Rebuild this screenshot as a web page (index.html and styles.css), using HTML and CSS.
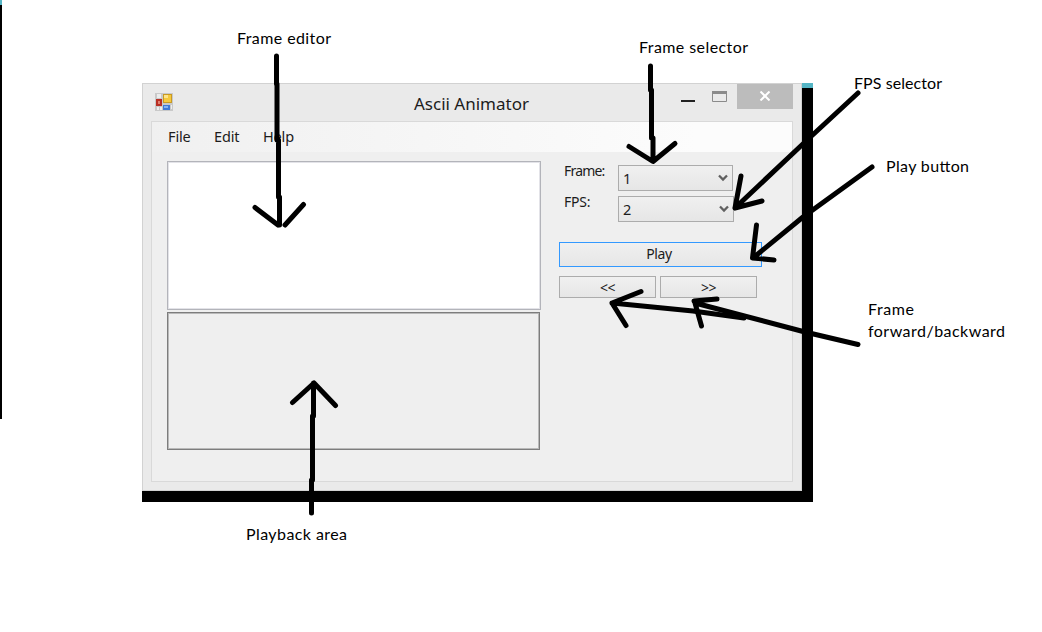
FILE: index.html
```html
<!DOCTYPE html>
<html lang="en">
<head>
<meta charset="utf-8">
<title>Ascii Animator</title>
<link rel="stylesheet" href="styles.css">
</head>
<body>
<div class="edge"></div>
<main class="backdrop">
  <section class="window">
    <header class="titlebar">
      <svg class="app-icon" width="18" height="18" viewBox="0 0 18 18">
        <rect width="18" height="18" fill="#c9c9c9"/>
        <rect x="2" y="1" width="4" height="4" fill="#ececec"/>
        <rect x="1" y="6" width="6" height="7" fill="#b92f24"/>
        <rect x="3" y="8" width="2" height="3" fill="#e08070"/>
        <rect x="8" y="1" width="9" height="9" fill="#c99a23"/>
        <rect x="9" y="2" width="7" height="7" fill="#f6c93c"/>
        <rect x="9" y="2" width="4" height="3" fill="#fde58b"/>
        <rect x="8" y="12" width="7" height="5" fill="#3e78d6"/>
        <rect x="9" y="13" width="4" height="2" fill="#83b2f4"/>
        <path d="M2 14h2v3H2zM5 14h2v3H5zM16 12h1v4h-1z" fill="#eee"/>
      </svg>
      <h1 class="title">Ascii Animator</h1>
      <div class="controls">
        <svg width="54" height="25" viewBox="0 0 54 25">
          <path d="M0 16h14v2H0z" fill="#222"/>
          <path d="M31.500 7.500h14v10h-14z" fill="none" stroke="#8b8b8b"/>
          <path d="M31 7h15v3H31z" fill="#8b8b8b"/>
        </svg>
        <span class="close"><svg width="12" height="10" viewBox="0 0 12 10"><path d="M1.500.500l9 9M10.500.500l-9 9" stroke="#fff" stroke-width="2"/></svg></span>
      </div>
    </header>
    <div class="client">
      <nav class="menu"><span class="file">File</span><span class="edit">Edit</span><span>Help</span></nav>
      <div class="content">
        <div class="panes">
          <div class="editor"></div>
          <div class="playback"></div>
        </div>
        <div class="side">
          <div class="row"><span class="label">Frame:</span><div class="select">1<svg width="10" height="8" viewBox="0 0 10 8"><path d="M1 1.500l4 4 4-4" fill="none" stroke="#606060" stroke-width="2.300"/></svg></div></div>
          <div class="row"><span class="label fps">FPS:</span><div class="select second">2<svg width="10" height="8" viewBox="0 0 10 8"><path d="M1 1.500l4 4 4-4" fill="none" stroke="#606060" stroke-width="2.300"/></svg></div></div>
          <div class="button play">Play</div>
          <div class="steps"><div class="button step">&lt;&lt;</div><div class="button step">&gt;&gt;</div></div>
        </div>
      </div>
    </div>
  </section>
</main>
<svg class="notes" width="1042" height="632" viewBox="0 0 1042 632">
  <g class="arrows">
    <path d="M276.500 56V84M277 84V140M278.500 140V197M279.500 197V225M255 207.500L278 225M303.500 204.500L285 225"/>
    <path d="M650.500 66V90M651.500 90V138M653 138V161M629 146.500L653 161.500L675 143.500"/>
    <path d="M858 93L805 142L735 208M741 176L735 208L762 201"/>
    <path d="M872 167L803 217L753 258M756.500 225L752.500 258L774 260"/>
    <path d="M858 344.500L805 332L695 303M717 299L694 301M695 303L701.500 326"/>
    <path d="M744 318L693 311L612 303M641 291.500L612 303L626 325.500"/>
    <path d="M311.500 513V480M312.500 480V416M313.500 416V383M292.500 402.500L314 383L335.500 405.500"/>
  </g>
  <g class="captions">
    <text x="237" y="44" textLength="94">Frame editor</text>
    <text x="639" y="53" textLength="109">Frame selector</text>
    <text x="854" y="89" textLength="88">FPS selector</text>
    <text x="886" y="172" textLength="83">Play button</text>
    <text x="868" y="315" textLength="46">Frame</text>
    <text x="868" y="337" textLength="137">forward/backward</text>
    <text x="246" y="540" textLength="101">Playback area</text>
  </g>
</svg>
</body>
</html>
```
FILE: styles.css
```css
* { box-sizing: border-box; }
body {
  margin: 0;
  width: 1042px;
  height: 632px;
  overflow: hidden;
  position: relative;
  display: flex;
  align-items: flex-start;
  background: #fff;
  color: #1c1c1c;
  font-family: "Noto Sans", sans-serif;
}
.edge {
  width: 2px;
  height: 419px;
  background: #000;
  border-top: 5px solid #55b5c5;
}
.backdrop {
  margin: 83px 0 0 140px;
  width: 671px;
  height: 419px;
  background: linear-gradient(#55b5c5 0 5px, #000 5px);
}
.window {
  width: 660px;
  height: 408px;
  border: 1px solid #d2d2d2;
  background: #eaeaea;
  padding: 0 8px 8px;
}
.titlebar {
  height: 37px;
  display: flex;
  align-items: flex-start;
}
.app-icon { margin: 9px 0 0 4px; }
.title {
  margin: 7px 0 0 241px;
  width: 130px;
  font-size: 17px;
  line-height: 26px;
  font-weight: 400;
  letter-spacing: 0;
  white-space: nowrap;
}
.controls { display: flex; margin-left: auto; gap: 2px; }
.close {
  width: 56px;
  height: 25px;
  display: grid;
  place-items: center;
  padding-bottom: 2px;
  background: #bcbcbc;
}
.client {
  height: 361px;
  width: 642px;
  border: 1px solid #d9d9d9;
  background: #efefef;
}
.menu {
  height: 30px;
  padding-left: 16px;
  display: flex;
  font-size: 14.5px;
  line-height: 29px;
  letter-spacing: -0.15px;
  background: linear-gradient(90deg, #f0f0f0, #fcfcfc 85%);
}
.file { width: 46px; }
.edit { width: 49px; }
.content { display: flex; padding: 9px 0 0 15px; gap: 18px; }
.editor {
  width: 374px;
  height: 149px;
  border: 1px solid #b3b4ba;
  box-shadow: inset 0 0 0 1px #e3e3e8;
  background: #fff;
}
.playback {
  width: 373px;
  height: 138px;
  margin-top: 2px;
  border: 1px solid #7d7d7d;
  box-shadow: inset 0 0 0 1px #b9b9b9;
}
.side { width: 203px; padding-top: 3px; font-size: 14px; }
.row { display: flex; height: 31px; }
.label {
  width: 59px;
  padding-left: 5px;
  line-height: 13px;
  letter-spacing: -0.8px;
}
.fps { letter-spacing: -0.2px; }
.select {
  width: 115px;
  height: 26px;
  margin-top: 1px;
  border: 1px solid #acacac;
  background: linear-gradient(#f0f0f0, #e6e6e6);
  display: flex;
  align-items: center;
  justify-content: space-between;
  padding: 0 4px 0 4px;
  font-size: 14.5px;
}
.select.second { width: 116px; }
.button {
  border: 1px solid #acacac;
  background: linear-gradient(#f0f0f0, #e6e6e6);
  display: grid;
  place-items: center;
}
.play {
  height: 25px;
  margin-top: 16px;
  padding: 0 3px 1px 0;
  line-height: 20px;
  border-color: #3399ff;
  letter-spacing: -0.4px;
}
.steps { display: flex; gap: 5px; margin-top: 9px; }
.step { width: 97px; height: 22px; line-height: 18px; font-size: 14px; padding-top: 2px; letter-spacing: -0.5px; }
.step + .step { margin-left: -1px; }
.notes { position: absolute; left: 0; top: 0; }
.arrows { fill: none; stroke: #000; stroke-width: 5; stroke-linecap: round; stroke-linejoin: round; }
.captions { font: 16px Lato, sans-serif; fill: #000; }
```
